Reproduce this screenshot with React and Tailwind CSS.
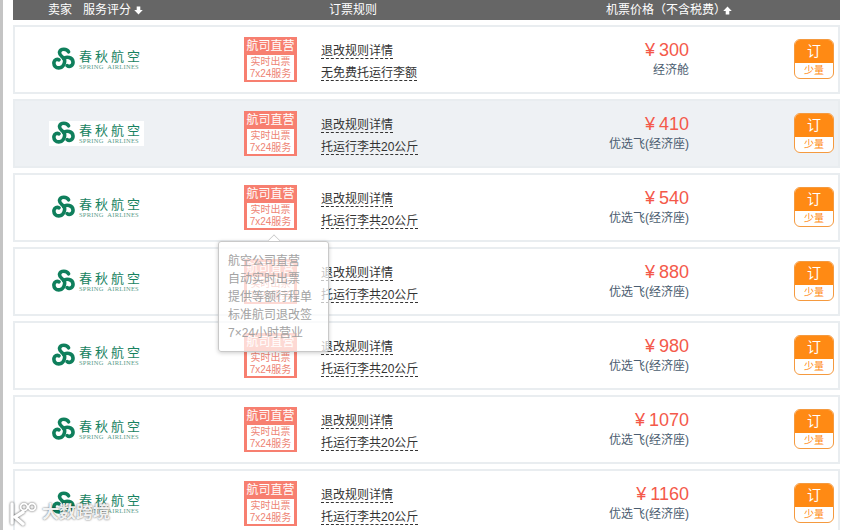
import React from 'react'

const cjk = { fontFamily: '"Liberation Sans", "Noto Sans CJK SC", sans-serif' }

const flights = [
	{ price: '300', cabin: '经济舱', bag: '无免费托运行李额' },
	{ price: '410', cabin: '优选飞(经济座)', bag: '托运行李共20公斤', active: true },
	{ price: '540', cabin: '优选飞(经济座)', bag: '托运行李共20公斤' },
	{ price: '880', cabin: '优选飞(经济座)', bag: '托运行李共20公斤' },
	{ price: '980', cabin: '优选飞(经济座)', bag: '托运行李共20公斤' },
	{ price: '1070', cabin: '优选飞(经济座)', bag: '托运行李共20公斤' },
	{ price: '1160', cabin: '优选飞(经济座)', bag: '托运行李共20公斤' },
]

const Arrow = ({ up, className }) => (
	<svg width="9" height="9" viewBox="0 0 8 8" className={`${up ? '' : 'rotate-180'} ${className}`}>
		<path d="M4 0.5 L7.8 4.5 L5.6 4.5 L5.6 7.5 L2.4 7.5 L2.4 4.5 L0.2 4.5 Z" fill="#fff" />
	</svg>
)

const Logo = () => (
	<div className="flex items-center w-[95px] h-[25px] bg-white pl-[3px] -mt-[1px]">
		<svg width="23" height="24" viewBox="0 0 23 24" className="shrink-0">
			<g fill="none" stroke="#0f7f5c" strokeWidth="3.6" strokeLinecap="round">
				<path d="M16.5 4.8 C15 1.4 8.6 1.2 7.6 5 C6.8 8.2 10.6 9.6 12 11.6 C13.4 13.8 12.4 20 7.8 20.8 C3.8 21.4 1.4 18.4 2 15.2 C2.5 12.6 5 11.8 7 12.8" />
				<path d="M11.8 11.6 C14 9.2 20.6 10 21 14.8 C21.3 18.8 17.4 20.4 15.2 18.6" />
			</g>
		</svg>
		<div className="ml-[4px] leading-none">
			<div className="text-[13px] leading-[15px] tracking-[3px] text-[#17825f] whitespace-nowrap" style={{ fontFamily: '"Noto Sans CJK SC", sans-serif' }}>春秋航空</div>
			<div className="text-[6.5px] leading-[8px] tracking-[0.25px] text-[#5b9c8a] whitespace-nowrap" style={{ fontFamily: '"Liberation Serif", serif' }}>SPRING&nbsp;&nbsp;AIRLINES</div>
		</div>
	</div>
)

const Badge = () => (
	<div className="w-[53px] h-[45px] bg-[#f77f70] p-[2px] pt-0 flex flex-col items-center">
		<div className="h-[18px] leading-[18px] text-[12px] text-white whitespace-nowrap">航司直营</div>
		<div className="w-[47px] h-[25px] bg-white text-[10px] leading-[12px] text-[#ee8474] text-center whitespace-nowrap pt-[1px]">
			<div>实时出票</div>
			<div>7x24服务</div>
		</div>
	</div>
)

const BookButton = () => (
	<div className="w-[40px] h-[40px] rounded-[6px] border border-[#f59a3f] overflow-hidden flex flex-col bg-white">
		<div className="h-[24px] bg-[#ff8a14] text-white text-[14px] leading-[22px] text-center">订</div>
		<div className="flex-1 text-[10px] leading-[15px] text-center text-[#ff8a14]">少量</div>
	</div>
)

const Row = ({ flight }) => (
	<div className={`flex items-center h-[69px] border-2 border-[#e9edf0] ${flight.active ? 'bg-[#eef1f4]' : 'bg-white'}`}>
		<div className="w-[229px] pl-[34px] shrink-0">
			<Logo />
		</div>
		<div className="w-[77px] shrink-0">
			<Badge />
		</div>
		<div className="w-[150px] shrink-0 text-[12px] text-[#333] mt-[7px]">
			<div className="h-[22px] leading-[19px]">
				<span className="inline-block h-[17px] border-b border-dashed border-[#333]">退改规则详情</span>
			</div>
			<div className="h-[20px] leading-[19px]">
				<span className="inline-block h-[17px] border-b border-dashed border-[#333] whitespace-nowrap">{flight.bag}</span>
			</div>
		</div>
		<div className="w-[218px] shrink-0 text-right -mt-[3px]">
			<div className="text-[18px] leading-[24px] text-[#f4594a]">
				<span className="mr-[4px]">¥</span>{flight.price}
			</div>
			<div className="text-[12px] leading-[16px] text-[#4b5d70]">{flight.cabin}</div>
		</div>
		<div className="ml-[105px] shrink-0 -mt-[1px]">
			<BookButton />
		</div>
	</div>
)

const Tooltip = () => (
	<div className="absolute left-[218px] top-[241px] w-[111px] h-[111px] bg-white/70 border border-[#c9c9c9] rounded-[3px] shadow-[0_1px_4px_rgba(0,0,0,0.2)] pl-[9px] pt-[10px] text-[12px] leading-[18px] text-[#a3a3a3] whitespace-nowrap">
		<div className="absolute left-[50px] top-[-6px] w-[10px] h-[10px] rotate-45 bg-white border-l border-t border-[#c9c9c9] [clip-path:polygon(0_0,100%_0,0_100%)]" />
		<div>航空公司直营</div>
		<div>自动实时出票</div>
		<div>提供等额行程单</div>
		<div>标准航司退改签</div>
		<div>7×24小时营业</div>
	</div>
)

const Watermark = () => (
	<div className="absolute left-[8px] top-[500px] flex items-center text-white/90 [text-shadow:0_0_2px_rgba(0,0,0,0.7)]">
		<svg width="34" height="26" viewBox="0 0 34 26" className="drop-shadow-[0_0_1px_rgba(0,0,0,0.7)]">
			<g fill="none" stroke="#fff" strokeLinecap="round">
				<path d="M4 4 L4 23" strokeWidth="3.4" />
				<path d="M15 12 L7 17 L15 24" strokeWidth="3.4" />
				<circle cx="16" cy="7" r="3.4" strokeWidth="1.8" />
				<circle cx="24" cy="7" r="3.4" strokeWidth="1.8" />
			</g>
		</svg>
		<span className="text-[17px] leading-[26px] whitespace-nowrap font-bold">大数跨境</span>
	</div>
)

export default function App() {
	return (
		<div className="relative w-[845px] h-[530px] overflow-hidden bg-white" style={cjk}>
			<div className="absolute left-0 top-0 w-[3px] h-full bg-[#c4c4c4]" />
			<div className="ml-[13px] w-[827px]">
				<div className="flex items-center h-[20px] bg-[#666] text-white text-[12px] leading-[20px] whitespace-nowrap">
					<span className="ml-[35px]">卖家</span>
					<span className="ml-[11px]">服务评分</span>
					<Arrow className="ml-[3px]" />
					<span className="ml-[186px]">订票规则</span>
					<span className="ml-[229px]">机票价格（不含税费）</span>
					<Arrow up className="-ml-[3px]" />
				</div>
				<div className="flex flex-col gap-[5px] mt-[5px]">
					{flights.map((f) => <Row key={f.price} flight={f} />)}
				</div>
			</div>
			<Tooltip />
			<Watermark />
		</div>
	)
}
